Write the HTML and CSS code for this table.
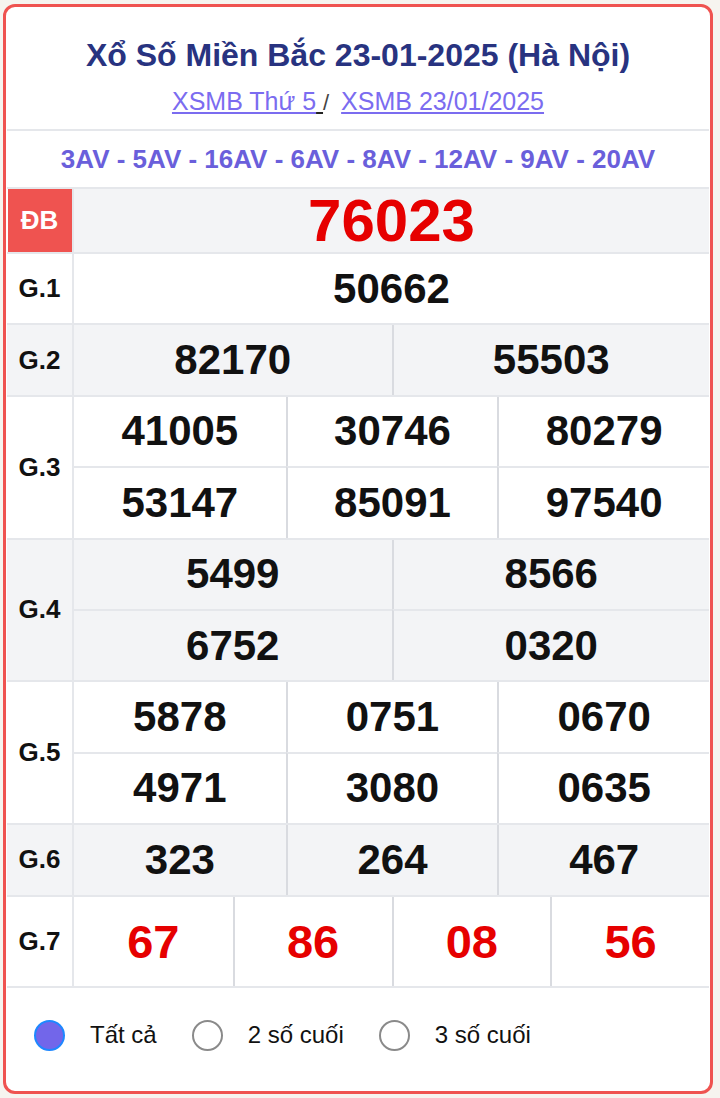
FILE: index.html
```html
<!DOCTYPE html>
<html lang="vi">
<head>
<meta charset="utf-8">
<title>XSMB 23/01/2025</title>
<link rel="stylesheet" href="styles.css">
</head>
<body>
<div class="card">
  <header class="head">
    <h1 class="title">Xổ Số Miền Bắc 23-01-2025 (Hà Nội)</h1>
    <p class="links"><a href="#">XSMB Thứ 5</a><span class="u"> </span> <span class="sep">/</span> <a href="#" class="l2">XSMB 23/01/2025</a></p>
  </header>
  <div class="codes">3AV - 5AV - 16AV - 6AV - 8AV - 12AV - 9AV - 20AV</div>

  <div class="prize alt">
    <div class="label db">ĐB</div>
    <div class="nums c1"><span class="num special">76023</span></div>
  </div>
  <div class="prize">
    <div class="label">G.1</div>
    <div class="nums c1"><span class="num">50662</span></div>
  </div>
  <div class="prize alt">
    <div class="label">G.2</div>
    <div class="nums c2"><span class="num">82170</span><span class="num">55503</span></div>
  </div>
  <div class="prize">
    <div class="label">G.3</div>
    <div class="nums c3">
      <span class="num">41005</span><span class="num">30746</span><span class="num">80279</span>
      <span class="num">53147</span><span class="num">85091</span><span class="num">97540</span>
    </div>
  </div>
  <div class="prize alt">
    <div class="label">G.4</div>
    <div class="nums c2">
      <span class="num">5499</span><span class="num">8566</span>
      <span class="num">6752</span><span class="num">0320</span>
    </div>
  </div>
  <div class="prize">
    <div class="label">G.5</div>
    <div class="nums c3">
      <span class="num">5878</span><span class="num">0751</span><span class="num">0670</span>
      <span class="num">4971</span><span class="num">3080</span><span class="num">0635</span>
    </div>
  </div>
  <div class="prize alt">
    <div class="label">G.6</div>
    <div class="nums c3"><span class="num">323</span><span class="num">264</span><span class="num">467</span></div>
  </div>
  <div class="prize last">
    <div class="label">G.7</div>
    <div class="nums c4">
      <span class="num red">67</span><span class="num red">86</span><span class="num red">08</span><span class="num red">56</span>
    </div>
  </div>

  <div class="radios">
    <label class="radio"><span class="dot on"></span><span class="rtext">Tất cả</span></label>
    <label class="radio"><span class="dot"></span><span class="rtext">2 số cuối</span></label>
    <label class="radio"><span class="dot"></span><span class="rtext">3 số cuối</span></label>
  </div>
</div>
</body>
</html>
```
FILE: styles.css
```css
* { box-sizing: border-box; }
html, body { margin: 0; padding: 0; }
body {
  background: #f6f4ef;
  font-family: "Liberation Sans", Arial, sans-serif;
  color: #111;
  padding: 4px 7px 4px 3px;
}
.card {
  height: 1090px;
  background: #fff;
  border: 3px solid #ef5350;
  border-radius: 12px;
  padding: 0 1px;
  display: flex;
  flex-direction: column;
  overflow: hidden;
}
.head {
  padding: 30px 0 11px;
  text-align: center;
}
.title {
  margin: 0;
  font-size: 32px;
  line-height: 36px;
  font-weight: 700;
  color: #283380;
}
.links {
  margin: 13px 0 0;
  font-size: 25px;
  line-height: 30px;
  color: #333;
}
.links a {
  color: #7b6cf0;
  text-decoration: underline;
}
.links .u {
  text-decoration: underline;
  text-decoration-color: #222;
}
.links .sep { color: #444; font-size: 22px; }
.links .l2 { margin-left: 5px; }
.codes {
  border-top: 2px solid #e5e7eb;
  height: 58px;
  display: flex;
  align-items: center;
  justify-content: center;
  font-size: 26px;
  font-weight: 700;
  color: #6a5fdb;
}
.prize {
  display: flex;
  border-top: 2px solid #e5e7eb;
}
.prize.alt { background: #f3f4f6; }
.prize.last { border-bottom: 2px solid #e5e7eb; }
.label {
  width: 67px;
  flex: 0 0 67px;
  border-right: 2px solid #e5e7eb;
  display: flex;
  align-items: center;
  justify-content: center;
  font-size: 26px;
  font-weight: 700;
  color: #111;
}
.label.db {
  background: #ef5350;
  color: #fff;
  box-shadow: inset 1px 0 0 #fff;
}
.nums {
  flex: 1;
  display: grid;
}
.c1 { grid-template-columns: 1fr; }
.c2 { grid-template-columns: repeat(2, 1fr); }
.c3 { grid-template-columns: repeat(3, 1fr); }
.c4 { grid-template-columns: repeat(4, 1fr); }
.num {
  box-sizing: content-box;
  height: 69.4px;
  display: flex;
  align-items: center;
  justify-content: center;
  font-size: 42px;
  font-weight: 700;
  color: #111;
}
.c2 .num:nth-child(2n),
.c3 .num:not(:nth-child(3n+1)),
.c4 .num:not(:nth-child(4n+1)) {
  border-left: 2px solid #d9dbe0;
}
.c2 .num:nth-child(n+3),
.c3 .num:nth-child(n+4) {
  border-top: 2px solid #e5e7eb;
}
.num.special {
  height: 63px;
  font-size: 60px;
  color: #e60000;
}
.num.red {
  height: 89px;
  font-size: 47px;
  color: #e60000;
}
.radios {
  flex: 1;
  display: flex;
  align-items: flex-start;
  gap: 35px;
  padding: 32px 0 0 27px;
}
.radio {
  display: flex;
  align-items: center;
  gap: 25px;
  font-size: 24px;
  color: #111;
}
.dot {
  width: 31px;
  height: 31px;
  border-radius: 50%;
  border: 2px solid #8a8a8a;
  background: #fff;
}
.dot.on {
  background: #7266ea;
  border-color: #1e88ff;
}
```
